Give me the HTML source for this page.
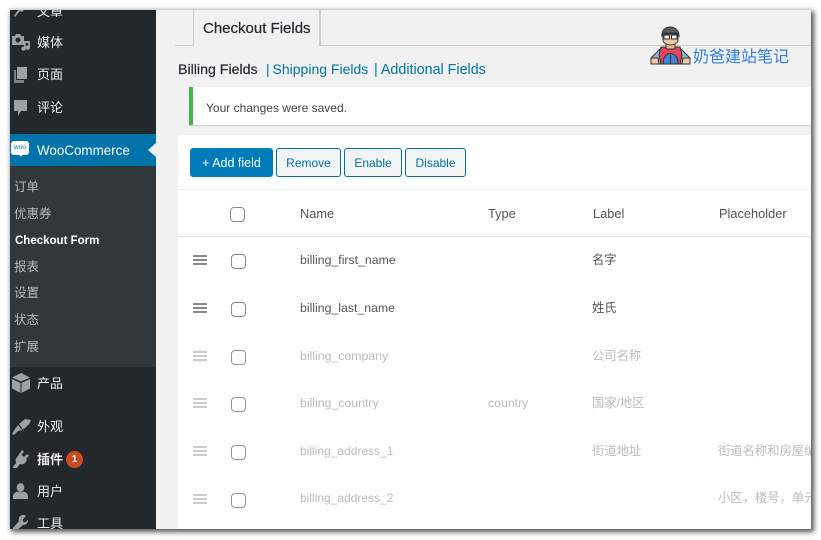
<!DOCTYPE html>
<html><head><meta charset="utf-8">
<style>
html,body{margin:0;padding:0;width:821px;height:540px;overflow:hidden;background:#fff}
body{font-family:"Liberation Sans","Noto Sans CJK SC",sans-serif;position:relative}
#win{position:absolute;left:10px;top:10px;width:801px;height:519px;background:#f1f1f1;overflow:hidden;box-shadow:2px 2px 5px 1px #555}
#inner{position:absolute;left:0;top:0;width:801px;height:519px;filter:blur(.35px)}
.a{position:absolute;white-space:nowrap}
#inner>*{position:absolute}
.m{left:27px;color:#eee;font-size:13px;line-height:18px;white-space:nowrap}
.s{left:4px;color:#b4b9be;font-size:12.5px;line-height:16px;white-space:nowrap}
.c{font-size:12.3px;line-height:18px;color:#555;white-space:nowrap}
.t{font-size:12.8px}
.g{color:#bbb}
.cb{width:13px;height:13px;border:1px solid #7e8993;border-radius:4px;background:#fff}
.cb.o{border-color:#8f959b}
.h{width:14px;height:6px;border-top:2px solid #888;border-bottom:2px solid #888}
.h:after{content:"";display:block;height:2px;background:#888;margin-top:2px}
.h.o{border-color:#ccc}.h.o:after{background:#ccc}
.b{top:138px;height:29px;box-sizing:border-box;border:1px solid #0071a1;border-radius:3px;background:#f3f5f6;color:#0071a1;font-size:12px;line-height:29px;text-align:center}
svg{position:absolute;fill:#9ca1a6}
</style></head><body>
<div id="win"><div id="inner">
<div style="left:0;top:0;width:146px;height:519px;background:#23282d"></div>
<div style="left:0;top:124px;width:146px;height:32px;background:#0073aa"></div>
<div style="left:0;top:156px;width:146px;height:201px;background:#32373c"></div>
<div style="left:138px;top:133px;border:7px solid transparent;border-right:8px solid #f1f1f1;border-left:0"></div>

<svg style="left:2px;top:-9px" width="17" height="17" viewBox="0 0 17 17"><path d="M9 1l7 6-3 1-3 3-2-1-5 6-1-1 4-6-2-2 3-3z"/></svg>
<div class="m" style="top:-7px">文章</div>
<svg style="left:2px;top:23px" width="19" height="18" viewBox="0 0 19 18"><path fill-rule="evenodd" d="M0 3h3l1-2h4l1 2h3v9H0zM6 4.500a2.500 2.500 0 100 5 2.500 2.500 0 000-5z"/><path d="M12 8h6v6.500a2.200 2.200 0 11-1.800-2V10h-2.400v5.500a2.200 2.200 0 11-1.800-2z"/></svg>
<div class="m" style="top:24px">媒体</div>
<svg style="left:3px;top:57px" width="15" height="17" viewBox="0 0 15 17"><path d="M4 0h10v12H4z"/><path d="M1 3h2v10h8v3H1z" opacity=".75"/></svg>
<div class="m" style="top:56px">页面</div>
<svg style="left:3px;top:90px" width="15" height="16" viewBox="0 0 15 16"><path d="M1 0h13v11H8l-3 5v-5H1z"/></svg>
<div class="m" style="top:89px">评论</div>
<div style="left:1px;top:131px;width:18px;height:14px;background:#fff;border-radius:3px;color:#0073aa;font-size:6.500px;line-height:14px;text-align:center">woo</div>
<div style="left:9px;top:144px;border:2px solid transparent;border-top:3px solid #fff"></div>
<div class="m" style="top:132px;color:#fff;font-size:13.400px">WooCommerce</div>

<div class="s" style="top:169px">订单</div>
<div class="s" style="top:196px">优惠券</div>
<div class="s" style="top:223px;left:5px;color:#fff;font-weight:bold;font-size:11.500px">Checkout Form</div>
<div class="s" style="top:249px">报表</div>
<div class="s" style="top:275px">设置</div>
<div class="s" style="top:302px">状态</div>
<div class="s" style="top:329px">扩展</div>

<svg style="left:2px;top:363px" width="18" height="20" viewBox="0 0 18 20"><path d="M9 0l9 4.500-9 4-9-4z"/><path d="M0 6l8.500 4v10L0 15.500zM18 6l-8.500 4v10l8.500-4.500z"/></svg>
<div class="m" style="top:365px">产品</div>
<svg style="left:2px;top:408px" width="19" height="17" viewBox="0 0 19 17"><path d="M7 6l6-5 6 1-1.500 3.500L13 10l-2 1.500z"/><path d="M6 7l4 5-4 1-4 4-2-1 3-5z"/></svg>
<div class="m" style="top:408px">外观</div>
<svg style="left:3px;top:440px" width="16" height="18" viewBox="0 0 16 18"><path d="M9 0l2 1.500-2.500 3.500 2.500 2 3-3 2 1.500-3 3.500 1 1-2 3-2.500 1.500-2.500-.5-3 4H0l.5-2 2.500-3-.5-3.500z"/></svg>
<div class="m" style="top:441px;font-weight:bold">插件</div>
<div style="left:56px;top:441px;width:17px;height:17px;border-radius:50%;background:#ca4a1f;color:#fff;font-size:10px;font-weight:bold;line-height:17px;text-align:center">1</div>
<svg style="left:3px;top:473px" width="15" height="17" viewBox="0 0 15 17"><ellipse cx="7.500" cy="4.500" rx="3.800" ry="4.500"/><path d="M0 13c0-3 3-4 4.500-4.500 1.500 1 4.500 1 6 0C12 9 15 10 15 13v3H0z"/></svg>
<div class="m" style="top:473px">用户</div>
<svg style="left:2px;top:505px" width="17" height="17" viewBox="0 0 17 17"><path d="M11 0a4.500 4.500 0 00-4 6L1 13a2.200 2.200 0 003 3l7-6a4.500 4.500 0 005-5l-3 2.500-2-1-.5-2L14 1a4 4 0 00-3-1z"/></svg>
<div class="m" style="top:505px">工具</div>

<!-- tabs -->
<div style="left:165px;top:35px;width:636px;height:1px;background:#ccc"></div>
<div style="left:183px;top:0;width:128px;height:36px;box-sizing:border-box;background:#f1f1f1;border:1px solid #ccc;border-width:0 2px 0 1px"></div>
<div style="left:184px;top:35px;width:125px;height:1px;background:#f1f1f1"></div>
<div style="left:193px;top:9px;font-size:15px;line-height:20px;color:#23282d;white-space:nowrap;-webkit-text-stroke:.2px #23282d">Checkout Fields</div>
<div style="left:168px;top:51px;font-size:14.200px;line-height:18px;color:#23282d;white-space:nowrap;-webkit-text-stroke:.2px #23282d">Billing Fields</div>
<div style="left:256px;top:50px;font-size:14px;line-height:18px;color:#0073aa;white-space:nowrap">| <span style="margin-left:-1px">Shipping Fields</span></div>
<div style="left:364px;top:51px;font-size:14.300px;line-height:18px;color:#0073aa;white-space:nowrap">| Additional Fields</div>

<!-- notice -->
<div style="left:179px;top:77px;width:622px;height:38px;box-sizing:border-box;background:#fff;border-left:4px solid #46b450;box-shadow:0 1px 1px rgba(0,0,0,.15)"></div>
<div style="left:196px;top:90px;font-size:12px;line-height:17px;color:#444;white-space:nowrap">Your changes were saved.</div>

<!-- table panel -->
<div style="left:168px;top:125px;width:633px;height:394px;background:#fff"></div>
<div style="left:168px;top:179px;width:633px;height:1px;background:#eee"></div>
<div style="left:168px;top:226px;width:633px;height:1px;background:#e2e2e2"></div>

<div class="b" style="left:180px;width:83px;background:#007cba;color:#fff;border-color:#007cba;font-size:12.500px;line-height:29px">+ Add field</div>
<div class="b" style="left:266px;width:65px;background:#f1f3f4">Remove</div>
<div class="b" style="left:334px;width:58px;background:#f1f3f4">Enable</div>
<div class="b" style="left:395px;width:61px;background:#f1f3f4">Disable</div>

<div class="cb" style="left:220px;top:197px"></div>
<div class="c t" style="left:290px;top:195px">Name</div>
<div class="c t" style="left:478px;top:195px">Type</div>
<div class="c t" style="left:583px;top:195px">Label</div>
<div class="c t" style="left:709px;top:195px">Placeholder</div>

<div class="h" style="left:183px;top:245px"></div>
<div class="cb" style="left:221px;top:244px"></div>
<div class="c" style="left:290px;top:241px">billing_first_name</div>
<div class="c" style="left:582px;top:241px">名字</div>

<div class="h" style="left:183px;top:293px"></div>
<div class="cb" style="left:221px;top:292px"></div>
<div class="c" style="left:290px;top:289px">billing_last_name</div>
<div class="c" style="left:582px;top:289px">姓氏</div>

<div class="h o" style="left:183px;top:341px"></div>
<div class="cb o" style="left:221px;top:340px"></div>
<div class="c g" style="left:290px;top:337px">billing_company</div>
<div class="c g" style="left:582px;top:337px">公司名称</div>

<div class="h o" style="left:183px;top:388px"></div>
<div class="cb o" style="left:221px;top:387px"></div>
<div class="c g" style="left:290px;top:384px">billing_country</div>
<div class="c g" style="left:478px;top:384px">country</div>
<div class="c g" style="left:582px;top:384px">国家/地区</div>

<div class="h o" style="left:183px;top:436px"></div>
<div class="cb o" style="left:221px;top:435px"></div>
<div class="c g" style="left:290px;top:432px;font-size:12px">billing_address_1</div>
<div class="c g" style="left:582px;top:432px">街道地址</div>
<div class="c g" style="left:708px;top:432px">街道名称和房屋编号</div>

<div class="h o" style="left:183px;top:484px"></div>
<div class="cb o" style="left:221px;top:483px"></div>
<div class="c g" style="left:290px;top:479px;font-size:12px">billing_address_2</div>
<div class="c g" style="left:708px;top:479px">小区，楼号，单元</div>
</div></div>

<!-- watermark avatar -->
<svg style="left:650px;top:25px;fill:none" width="41" height="40" viewBox="0 0 41 40">
<path d="M1 39v-6l9-9h21l9 9v6z" fill="#8fb8dc" stroke="#333" stroke-width="1"/>
<path d="M1 33h7l1 6H1zM40 33h-7l-1 6h8z" fill="#f0c9a0" stroke="#333" stroke-width="1"/>
<path d="M11 22h19l2 8-2 9H11l-2-9z" fill="#e0455f" stroke="#333" stroke-width="1"/>
<path d="M13 39c0-14 15-14 15 0z" fill="#3f86d0" stroke="#333" stroke-width="1"/>
<path d="M20.500 29v10" stroke="#333" stroke-width="1"/>
<rect x="16" y="17" width="9" height="7" fill="#e8bd92" stroke="#333" stroke-width="1"/>
<path d="M13 9h15v6c0 3-4 5-7.500 5S13 18 13 15z" fill="#f0c9a0" stroke="#333" stroke-width="1"/>
<path d="M12 11C11 -1 29 -1 29 11l-2-3H14z" fill="#5a5a5a" stroke="#333" stroke-width="1"/>
<rect x="14" y="10" width="5.500" height="4" fill="#eef" stroke="#333" stroke-width="1"/>
<rect x="21.500" y="10" width="5.500" height="4" fill="#eef" stroke="#333" stroke-width="1"/>
</svg>
<div class="a" style="left:693px;top:45px;font-size:16px;line-height:20px;color:#2b7be8;font-family:'WenQuanYi Zen Hei','Noto Sans CJK SC',sans-serif;text-shadow:0 0 2px #fff">奶爸建站笔记</div>
</body></html>
